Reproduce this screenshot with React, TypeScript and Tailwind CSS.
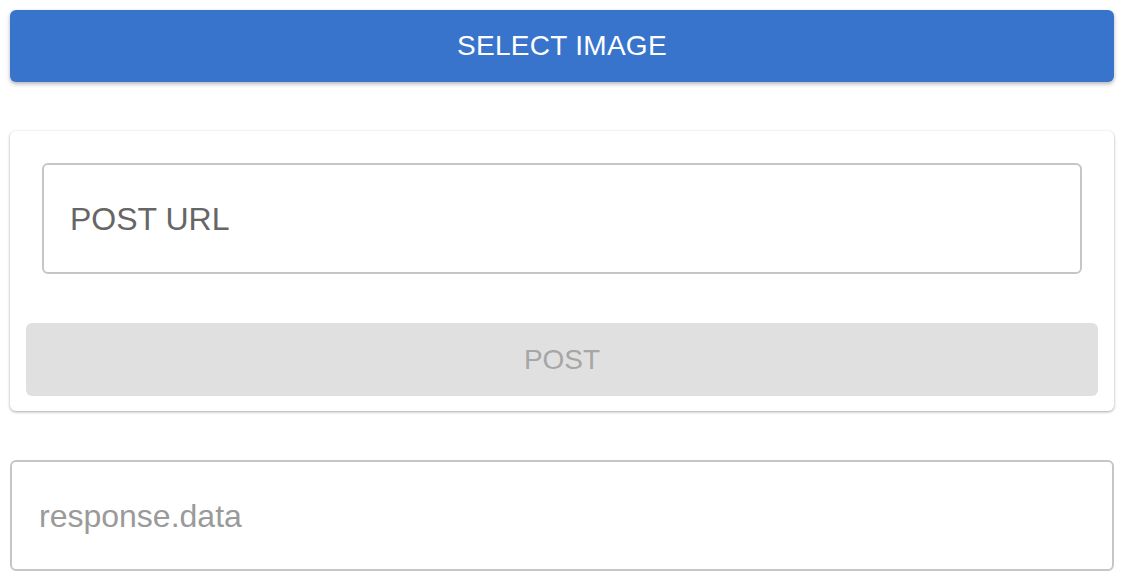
export default function App() {
  return (
    <div
      className="flex flex-col p-[10px] bg-white w-[1124px] h-[582px]"
      style={{ fontFamily: '"Liberation Sans", Arial, sans-serif' }}
    >
      <button className="h-[72px] w-full rounded-[6px] bg-[#3874cb] text-white text-[28px] tracking-[0.01em] shadow-[0_2px_4px_rgba(0,0,0,0.3)]">
        SELECT IMAGE
      </button>

      <div className="mt-[49px] rounded-[6px] bg-white px-[16px] pt-[32px] pb-[15px] shadow-[0_1px_3px_rgba(0,0,0,0.35)]">
        <div className="mx-[16px] flex h-[111px] items-center rounded-[6px] border-2 border-[#c6c6c6] px-[26px]">
          <span className="text-[32px] text-[#666666]">POST URL</span>
        </div>
        <button className="mt-[49px] h-[73px] w-full rounded-[6px] bg-[#e0e0e0] text-[28px] text-[#a6a6a6]">
          POST
        </button>
      </div>

      <div className="mt-[49px] flex h-[111px] items-center rounded-[6px] border-2 border-[#c6c6c6] px-[27px]">
        <span className="text-[32px] text-[#9a9a9a]">response.data</span>
      </div>
    </div>
  );
}
